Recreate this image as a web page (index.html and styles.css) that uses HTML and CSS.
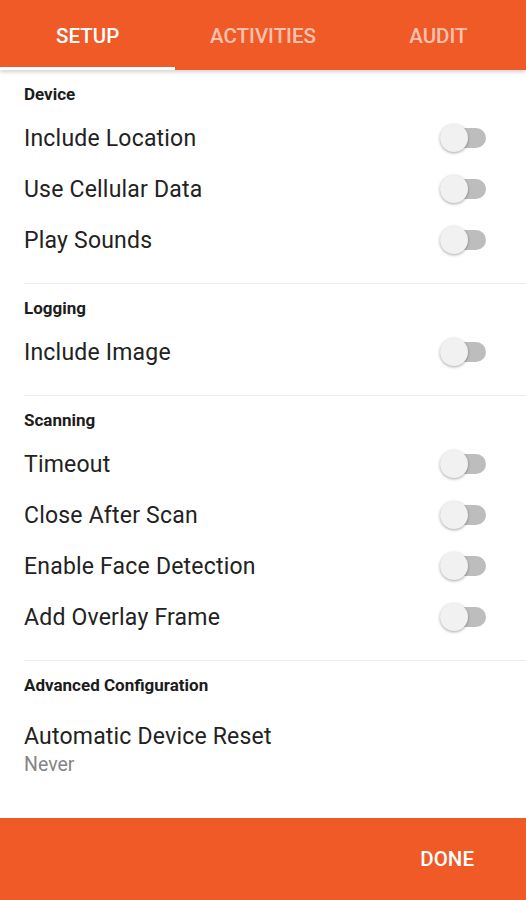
FILE: index.html
```html
<!DOCTYPE html>
<html lang="en">
<head>
  <meta charset="UTF-8">
  <title>Setup</title>
  <link rel="stylesheet" href="styles.css">
</head>
<body>
  <div class="app">
    <div class="tabs">
      <div class="tab active">SETUP</div>
      <div class="tab">ACTIVITIES</div>
      <div class="tab">AUDIT</div>
    </div>

    <div class="content">
      <div class="section">
        <div class="section-title">Device</div>
        <div class="row"><span>Include Location</span><span class="switch"></span></div>
        <div class="row"><span>Use Cellular Data</span><span class="switch"></span></div>
        <div class="row"><span>Play Sounds</span><span class="switch"></span></div>
      </div>

      <div class="section">
        <div class="section-title">Logging</div>
        <div class="row"><span>Include Image</span><span class="switch"></span></div>
      </div>

      <div class="section">
        <div class="section-title">Scanning</div>
        <div class="row"><span>Timeout</span><span class="switch"></span></div>
        <div class="row"><span>Close After Scan</span><span class="switch"></span></div>
        <div class="row"><span>Enable Face Detection</span><span class="switch"></span></div>
        <div class="row"><span>Add Overlay Frame</span><span class="switch"></span></div>
      </div>

      <div class="section last">
        <div class="section-title">Advanced Configuration</div>
        <div class="pref">
          <div class="pref-title">Automatic Device Reset</div>
          <div class="pref-summary">Never</div>
        </div>
      </div>
    </div>

    <div class="footer">
      <span class="done">DONE</span>
    </div>
  </div>
</body>
</html>
```

FILE: styles.css
```css
body {
  margin: 0;
  font-family: Roboto, "Liberation Sans", sans-serif;
  background-color: #ffffff;
  color: #212121;
}
.app {
  display: flex;
  flex-direction: column;
  height: 900px;
}
.tabs {
  display: flex;
  height: 70px;
  background-color: #f05a26;
  box-shadow: 0 2px 4px rgba(0, 0, 0, 0.18);
  position: relative;
  z-index: 1;
}
.tab {
  flex: 1;
  display: flex;
  align-items: center;
  justify-content: center;
  padding-top: 5px;
  font-size: 20.5px;
  font-weight: 500;
  color: rgba(255, 255, 255, 0.65);
  border-bottom: 3px solid transparent;
}
.tab.active {
  color: #ffffff;
  border-bottom-color: #ffffff;
}
.content {
  flex: 1;
}
.section {
  padding-bottom: 18px;
  border-bottom: 1px solid #ececec;
  margin-left: 24px;
}
.section.last {
  border-bottom: none;
}
.section-title {
  padding-top: 13px;
  padding-bottom: 7px;
  line-height: 22px;
  font-size: 17px;
  font-weight: 700;
  color: #1c1c1c;
}
.row {
  display: flex;
  align-items: center;
  justify-content: space-between;
  height: 51px;
  padding-top: 1px;
  padding-right: 40px;
  box-sizing: border-box;
  font-size: 23px;
  letter-spacing: 0.2px;
  color: #222222;
}
.switch {
  position: relative;
  width: 46px;
  height: 20px;
  border-radius: 10px;
  background-color: #bdbdbd;
}
.switch::after {
  content: "";
  position: absolute;
  left: 0;
  top: -4px;
  width: 28px;
  height: 28px;
  border-radius: 50%;
  background-color: #f1f1f1;
  box-shadow: 0 1px 3px rgba(0, 0, 0, 0.35);
}
.pref {
  padding-top: 19px;
}
.pref-title {
  font-size: 23px;
  line-height: 30px;
  letter-spacing: 0.2px;
  color: #222222;
}
.pref-summary {
  font-size: 19.5px;
  line-height: 26px;
  color: #858585;
}
.footer {
  height: 82px;
  background-color: #f05a26;
  display: flex;
  align-items: center;
  justify-content: flex-end;
  padding-right: 52px;
}
.done {
  font-size: 20.5px;
  font-weight: 500;
  color: #ffffff;
}
```
